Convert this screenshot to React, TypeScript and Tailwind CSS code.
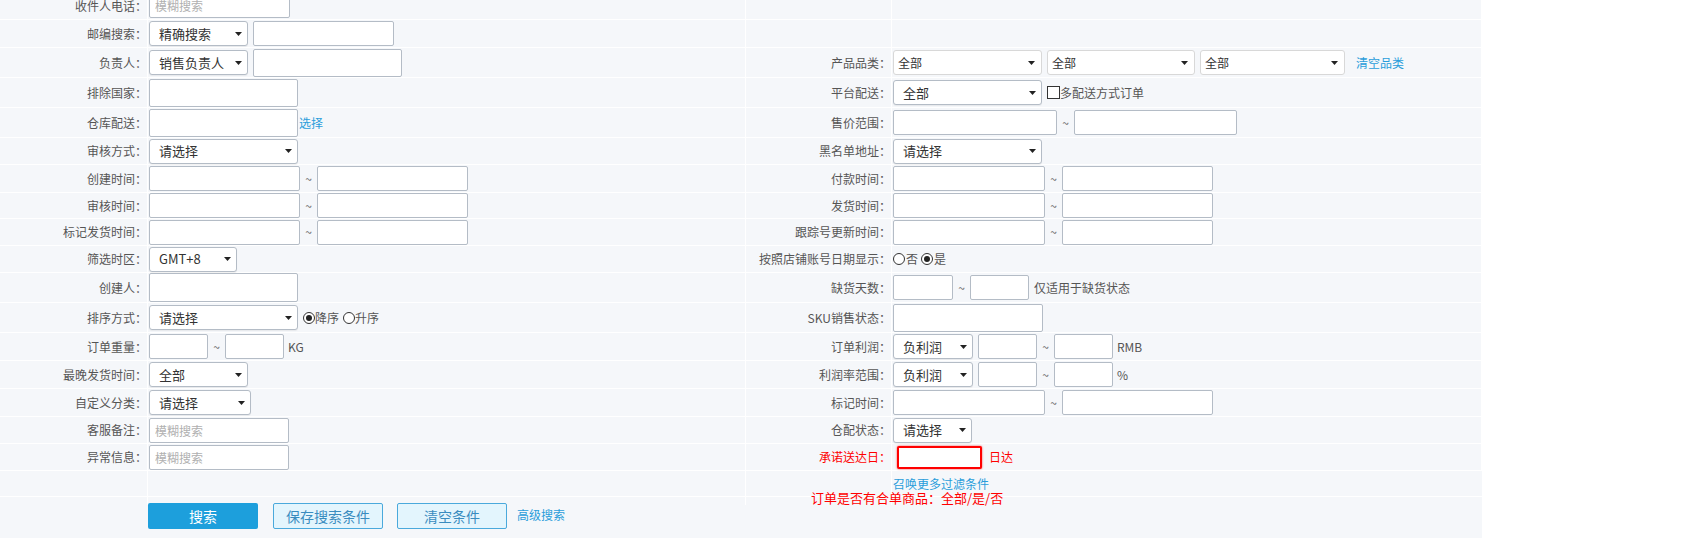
import React from 'react';

// little helpers for the order filter form

const Caret = () => (
  <svg width="7" height="4" viewBox="0 0 7 4" className="shrink-0">
    <path d="M0 0h7L3.5 4z" fill="#222" />
  </svg>
);

const Select = ({ value, className = '' }: { value: string; className?: string }) => (
  <div
    className={`flex h-[25px] items-center justify-between rounded-[3px] border border-[#b4bcc6] bg-white pl-[9px] pr-[5px] text-[13px] text-[#333] shadow-[0_1px_1px_rgba(0,0,0,0.06)] ${className}`}
  >
    <span className="whitespace-nowrap">{value}</span>
    <Caret />
  </div>
);

const CategorySelect = ({ className = '' }: { className?: string }) => (
  <div
    className={`flex h-[25px] items-center justify-between rounded-[3px] border border-[#d8d8d8] bg-white pl-[4px] pr-[6px] text-[12px] text-[#333] ${className}`}
  >
    <span>全部</span>
    <Caret />
  </div>
);

const Input = ({ className = '', placeholder }: { className?: string; placeholder?: string }) => (
  <input
    type="text"
    readOnly
    placeholder={placeholder}
    className={`h-[25px] rounded-[2px] border border-[#b4bcc6] bg-white px-[5px] text-[12px] text-[#333] outline-none placeholder:text-[#b0b0b0] ${className}`}
  />
);

const Tilde = () => <span className="w-[17px] text-center text-[12px] text-[#666]">~</span>;

const Radio = ({ checked }: { checked?: boolean }) => (
  <span className="inline-flex h-[12px] w-[12px] shrink-0 items-center justify-center rounded-full border border-[#333] bg-white">
    {checked && <span className="h-[6px] w-[6px] rounded-full bg-[#222]" />}
  </span>
);

const Link = ({ children, className = '' }: { children: React.ReactNode; className?: string }) => (
  <a className={`cursor-pointer whitespace-nowrap text-[12px] text-[#2a9ddb] ${className}`}>{children}</a>
);

const Row = ({
  h,
  label,
  rLabel,
  left,
  right,
}: {
  h: string;
  label?: React.ReactNode;
  rLabel?: React.ReactNode;
  left?: React.ReactNode;
  right?: React.ReactNode;
}) => (
  <div className={`grid grid-cols-[148px_598px_146px_590px] border-b border-white ${h}`}>
    <div className="flex items-center justify-end whitespace-nowrap border-r border-white text-[#555]">{label}</div>
    <div className="flex items-center border-r border-white pl-px">{left}</div>
    <div className="flex items-center justify-end whitespace-nowrap border-r border-white text-[#555]">{rLabel}</div>
    <div className="flex items-center border-r border-white pl-px">{right}</div>
  </div>
);

export default function App() {
  return (
    <div className="h-screen overflow-hidden bg-white font-['Noto_Sans_CJK_SC','Microsoft_YaHei',sans-serif] text-[12px] leading-[14px]">
      <div className="-mt-[8px] w-[1482px] bg-[#f5f7fa]">
        <Row h="h-[28px]" label="收件人电话：" left={<Input className="w-[141px]" placeholder="模糊搜索" />} />
        <Row
          h="h-[28px]"
          label="邮编搜索："
          left={
            <>
              <Select value="精确搜索" className="w-[99px]" />
              <Input className="ml-[5px] w-[141px]" />
            </>
          }
        />
        <Row
          h="h-[30px]"
          label="负责人："
          left={
            <>
              <Select value="销售负责人" className="w-[99px]" />
              <Input className="ml-[5px] h-[28px] w-[149px]" />
            </>
          }
          rLabel="产品品类："
          right={
            <>
              <CategorySelect className="w-[149px]" />
              <CategorySelect className="ml-[5px] w-[148px]" />
              <CategorySelect className="ml-[5px] w-[145px]" />
              <Link className="ml-[11px]">清空品类</Link>
            </>
          }
        />
        <Row
          h="h-[30px]"
          label="排除国家："
          left={<Input className="h-[28px] w-[149px]" />}
          rLabel="平台配送："
          right={
            <>
              <Select value="全部" className="w-[149px]" />
              <span className="ml-[5px] h-[13px] w-[13px] border border-[#333] bg-white" />
              <span className="text-[#555]">多配送方式订单</span>
            </>
          }
        />
        <Row
          h="h-[30px]"
          label="仓库配送："
          left={
            <>
              <Input className="h-[28px] w-[149px]" />
              <Link className="ml-[1px]">选择</Link>
            </>
          }
          rLabel="售价范围："
          right={
            <>
              <Input className="w-[164px]" />
              <Tilde />
              <Input className="w-[163px]" />
            </>
          }
        />
        <Row
          h="h-[27px]"
          label="审核方式："
          left={<Select value="请选择" className="w-[149px]" />}
          rLabel="黑名单地址："
          right={<Select value="请选择" className="w-[149px]" />}
        />
        {[
          ['创建时间：', '付款时间：', 'h-[28px]'],
          ['审核时间：', '发货时间：', 'h-[26px]'],
          ['标记发货时间：', '跟踪号更新时间：', 'h-[27px]'],
        ].map(([l, r, h]) => (
          <Row
            key={l}
            h={h}
            label={l}
            left={
              <>
                <Input className="w-[151px]" />
                <Tilde />
                <Input className="w-[151px]" />
              </>
            }
            rLabel={r}
            right={
              <>
                <Input className="w-[152px]" />
                <Tilde />
                <Input className="w-[151px]" />
              </>
            }
          />
        ))}
        <Row
          h="h-[27px]"
          label="筛选时区："
          left={<Select value="GMT+8" className="w-[88px]" />}
          rLabel="按照店铺账号日期显示："
          right={
            <span className="flex items-center text-[#555]">
              <Radio />
              <span className="ml-[1px]">否</span>
              <span className="ml-[3px]" />
              <Radio checked />
              <span className="ml-[1px]">是</span>
            </span>
          }
        />
        <Row
          h="h-[30px]"
          label="创建人："
          left={<Input className="h-[29px] w-[149px]" />}
          rLabel="缺货天数："
          right={
            <>
              <Input className="w-[60px]" />
              <Tilde />
              <Input className="w-[59px]" />
              <span className="ml-[5px] text-[#555]">仅适用于缺货状态</span>
            </>
          }
        />
        <Row
          h="h-[30px]"
          label="排序方式："
          left={
            <>
              <Select value="请选择" className="w-[149px]" />
              <span className="ml-[5px] flex items-center text-[#555]">
                <Radio checked />
                <span>降序</span>
                <span className="ml-[4px]" />
                <Radio />
                <span>升序</span>
              </span>
            </>
          }
          rLabel="SKU销售状态："
          right={<Input className="h-[28px] w-[150px]" />}
        />
        <Row
          h="h-[28px]"
          label="订单重量："
          left={
            <>
              <Input className="w-[59px]" />
              <Tilde />
              <Input className="w-[59px]" />
              <span className="ml-[4px] text-[#555]">KG</span>
            </>
          }
          rLabel="订单利润："
          right={
            <>
              <Select value="负利润" className="w-[80px]" />
              <Input className="ml-[5px] w-[59px]" />
              <Tilde />
              <Input className="w-[59px]" />
              <span className="ml-[4px] text-[#555]">RMB</span>
            </>
          }
        />
        <Row
          h="h-[28px]"
          label="最晚发货时间："
          left={<Select value="全部" className="w-[99px]" />}
          rLabel="利润率范围："
          right={
            <>
              <Select value="负利润" className="w-[80px]" />
              <Input className="ml-[5px] w-[59px]" />
              <Tilde />
              <Input className="w-[59px]" />
              <span className="ml-[4px] text-[#555]">%</span>
            </>
          }
        />
        <Row
          h="h-[28px]"
          label="自定义分类："
          left={<Select value="请选择" className="w-[102px]" />}
          rLabel="标记时间："
          right={
            <>
              <Input className="w-[152px]" />
              <Tilde />
              <Input className="w-[151px]" />
            </>
          }
        />
        <Row
          h="h-[27px]"
          label="客服备注："
          left={<Input className="w-[140px]" placeholder="模糊搜索" />}
          rLabel="仓配状态："
          right={<Select value="请选择" className="w-[79px]" />}
        />
        <Row
          h="h-[27px]"
          label="异常信息："
          left={<Input className="w-[140px]" placeholder="模糊搜索" />}
          rLabel={<span className="text-[#f00]">承诺送达日：</span>}
          right={
            <>
              <span className="ml-[4px] h-[23px] w-[85px] rounded-[2px] border-2 border-[#f00] bg-white shadow-[0_0_2px_#f33]" />
              <span className="ml-[7px] text-[#f00]">日达</span>
            </>
          }
        />
        <div className="grid h-[26px] grid-cols-[148px_598px_146px_590px] border-b border-white">
          <div className="border-r border-white" />
          <div className="border-r border-white" />
          <div className="border-r border-white" />
          <div className="flex flex-col items-start pl-px pt-[6px]">
            <Link>召唤更多过滤条件</Link>
            <span className="-ml-[82px] whitespace-nowrap text-[13px] text-[#f00]">订单是否有合单商品：全部/是/否</span>
          </div>
        </div>
        <div className="flex h-[60px] items-start pl-[148px] pt-[6px]">
          <button className="h-[26px] w-[110px] rounded-[2px] bg-[#1d9fdc] text-[14px] text-white">搜索</button>
          <button className="ml-[15px] h-[26px] w-[110px] rounded-[2px] border border-[#4aa9dc] bg-[#e3f5fd] text-[14px] text-[#3a8cbf]">
            保存搜索条件
          </button>
          <button className="ml-[14px] h-[26px] w-[110px] rounded-[2px] border border-[#4aa9dc] bg-[#e3f5fd] text-[14px] text-[#3a8cbf]">
            清空条件
          </button>
          <Link className="ml-[10px] mt-[5px]">高级搜索</Link>
        </div>
      </div>
    </div>
  );
}
